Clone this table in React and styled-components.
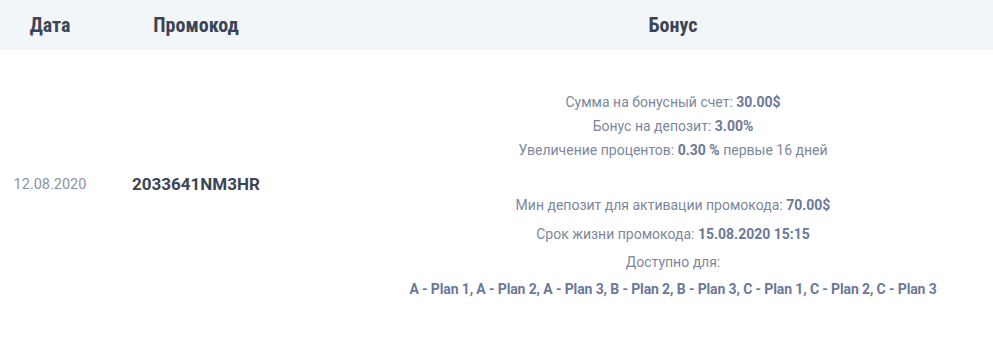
import React from "react";
import styled, { createGlobalStyle } from "styled-components";

const GlobalStyle = createGlobalStyle`
  body {
    margin: 0;
    background: #ffffff;
    font-family: Roboto, "Noto Sans", sans-serif;
  }
`;

const Table = styled.div`
  width: 993px;
`;

const Row = styled.div`
  display: grid;
  grid-template-columns: 100px 192px 1fr;
  align-items: center;
  background: ${(p) => (p.$head ? "#f3f6f9" : "transparent")};
  height: ${(p) => (p.$head ? "50px" : "auto")};
  padding: ${(p) => (p.$head ? "0" : "40px 0 30px")};
`;

const Cell = styled.div`
  text-align: center;
  padding-left: ${(p) => p.$offset || 0}px;
`;

// date and code sit a bit above the middle of the bonus block
const InfoCell = styled(Cell)`
  padding-bottom: 24px;
`;

const HeadText = styled.span`
  font-family: "Liberation Sans Narrow", "Roboto Condensed", Roboto, sans-serif;
  font-weight: 700;
  font-size: 20px;
  color: #3b4556;
`;

const DateText = styled.span`
  font-size: 14.5px;
  color: #8a93a5;
`;

const Code = styled.span`
  font-size: 17px;
  font-weight: 700;
  color: #3b4556;
`;

const Line = styled.div`
  font-size: 14px;
  line-height: 24px;
  color: #7d879a;
  margin-top: ${(p) => p.$gap || 0}px;

  b {
    color: #6c7899;
    font-weight: 700;
  }
`;

const Plans = styled.b`
  letter-spacing: -0.12px;
`;

export default function App() {
  return (
    <>
      <GlobalStyle />
      <Table>
        <Row $head>
          <Cell><HeadText>Дата</HeadText></Cell>
          <Cell><HeadText>Промокод</HeadText></Cell>
          <Cell $offset={61}><HeadText>Бонус</HeadText></Cell>
        </Row>
        <Row>
          <InfoCell><DateText>12.08.2020</DateText></InfoCell>
          <InfoCell><Code>2033641NM3HR</Code></InfoCell>
          <Cell $offset={61}>
            <Line>Сумма на бонусный счет: <b>30.00$</b></Line>
            <Line>Бонус на депозит: <b>3.00%</b></Line>
            <Line>Увеличение процентов: <b>0.30 %</b> первые 16 дней</Line>
            <Line $gap={31}>Мин депозит для активации промокода: <b>70.00$</b></Line>
            <Line $gap={5}>Срок жизни промокода: <b>15.08.2020 15:15</b></Line>
            <Line $gap={4}>Доступно для:</Line>
            <Line $gap={3}>
              <Plans>A - Plan 1, A - Plan 2, A - Plan 3, B - Plan 2, B - Plan 3, C - Plan 1, C - Plan 2, C - Plan 3</Plans>
            </Line>
          </Cell>
        </Row>
      </Table>
    </>
  );
}
